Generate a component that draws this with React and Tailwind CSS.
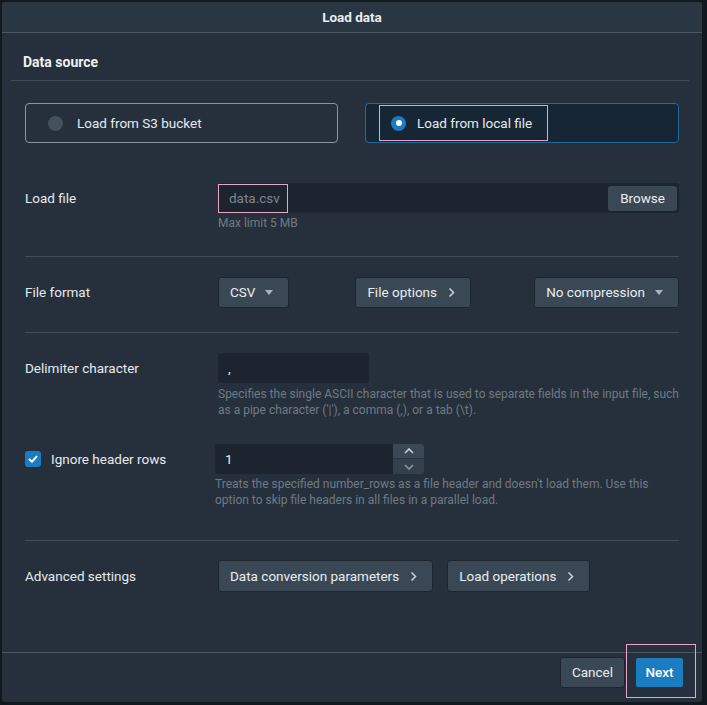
import React from 'react';

// small chevron / caret glyphs used by the buttons
const Caret = () => (
  <svg width="8" height="5" viewBox="0 0 8 5" className="ml-[10px]">
    <path d="M0 0 L8 0 L4 5 Z" fill="#a9b4bd" />
  </svg>
);

const Chevron = () => (
  <svg width="7" height="11" viewBox="0 0 7 11" className="ml-[11px]">
    <path d="M1.5 1.5 L5.5 5.5 L1.5 9.5" fill="none" stroke="#c9d1d8" strokeWidth="1.6" />
  </svg>
);

const Btn = ({ children, className = '' }) => (
  <div
    className={`flex items-center h-[31px] pl-[11px] pr-[15px] rounded-[3px] bg-[#3a4855] border border-[#1c252e] text-[13.5px] text-[#e9edf0] ${className}`}
  >
    {children}
  </div>
);

const Divider = () => <div className="h-px bg-[#414c57]" />;

const Help = ({ children, className = '' }) => (
  <p className={`text-[12px] leading-[16px] text-[#6f7a84] ${className}`}>{children}</p>
);

export default function App() {
  return (
    <div
      className="w-[707px] h-[705px] bg-[#11181e] pl-[2px] pt-[2px] text-[#e6eaee]"
      style={{ fontFamily: 'Roboto, "Liberation Sans", sans-serif' }}
    >
      <div className="w-[700px] h-[700px] bg-[#25303c] rounded-[3px] flex flex-col overflow-hidden">
        {/* header */}
        <div className="h-[31px] shrink-0 bg-[#2a3642] border-b border-[#4a5661] flex items-center justify-center text-[13.5px] font-bold text-[#e9edf0]">
          Load data
        </div>

        <div className="flex-1 flex flex-col">
          {/* section heading */}
          <div className="ml-[9px] w-[678px]">
            <div className="h-[47px] pl-[12px] pt-[19px] text-[14px] leading-[20px] font-bold text-[#eef1f4]">
              Data source
            </div>
            <Divider />
          </div>

          <div className="ml-[23px] w-[654px]">
            {/* source cards */}
            <div className="mt-[22px] flex gap-[27px]">
              <div className="w-[313px] h-[40px] rounded-[4px] border border-[#8b959e] flex items-center pl-[22px]">
                <span className="w-[15px] h-[15px] rounded-full bg-[#45525e]" />
                <span className="ml-[14px] text-[13.5px]">Load from S3 bucket</span>
              </div>
              <div className="w-[314px] h-[40px] rounded-[4px] border border-[#1d6b9f] bg-[#172634] flex items-center pl-[13px]">
                <div className="h-[36px] w-[169px] border border-[#e8a5c4] flex items-center pl-[11px]">
                  <span className="w-[15px] h-[15px] rounded-full bg-[#1b7dc0] flex items-center justify-center">
                    <span className="w-[6px] h-[6px] rounded-full bg-white" />
                  </span>
                  <span className="ml-[11px] text-[13.5px]">Load from local file</span>
                </div>
              </div>
            </div>

            {/* load file */}
            <div className="mt-[40px] flex">
              <div className="w-[193px] h-[30px] flex items-center text-[13.5px]">Load file</div>
              <div className="flex-1">
                <div className="h-[30px] bg-[#1c252f] rounded-[2px] flex items-center justify-between pr-[2px]">
                  <div className="h-[29px] w-[70px] border border-[#e8a5c4] flex items-center pl-[10px] text-[13.5px] text-[#7b858e]">
                    data.csv
                  </div>
                  <div className="h-[25px] px-[12px] rounded-[3px] bg-[#3a4855] flex items-center text-[13.5px] text-[#e9edf0]">
                    Browse
                  </div>
                </div>
                <Help className="mt-[2px]">Max limit 5 MB</Help>
              </div>
            </div>

            <div className="mt-[25px]">
              <Divider />
            </div>

            {/* file format */}
            <div className="mt-[20px] flex items-center">
              <div className="w-[193px] text-[13.5px]">File format</div>
              <Btn className="pr-[14px]">
                CSV
                <Caret />
              </Btn>
              <Btn className="ml-[66px]">
                File options
                <Chevron />
              </Btn>
              <Btn className="ml-auto">
                No compression
                <Caret />
              </Btn>
            </div>

            <div className="mt-[24px]">
              <Divider />
            </div>

            {/* delimiter */}
            <div className="mt-[20px] flex">
              <div className="w-[193px] h-[30px] flex items-center text-[13.5px]">Delimiter character</div>
              <div className="flex-1">
                <div className="w-[151px] h-[30px] bg-[#1c252f] rounded-[2px] flex items-center pl-[10px] text-[13.5px]">
                  ,
                </div>
                <Help className="mt-[3px]">
                  Specifies the single ASCII character that is used to separate fields in the input file, such as a pipe
                  character ('|'), a comma (,), or a tab (\t).
                </Help>
              </div>
            </div>

            {/* ignore header rows */}
            <div className="mt-[26px] flex">
              <div className="w-[190px] h-[30px] flex items-center">
                <span className="w-[16px] h-[16px] rounded-[3px] bg-[#1b7dc0] flex items-center justify-center">
                  <svg width="10" height="8" viewBox="0 0 10 8">
                    <path d="M1 4 L4 6.7 L9 1.2" fill="none" stroke="#fff" strokeWidth="2" />
                  </svg>
                </span>
                <span className="ml-[10px] text-[13.5px]">Ignore header rows</span>
              </div>
              <div className="flex-1">
                <div className="flex h-[30px]">
                  <div className="w-[178px] h-[30px] bg-[#1c252f] rounded-l-[2px] flex items-center pl-[10px] text-[13.5px]">
                    1
                  </div>
                  <div className="w-[31px] flex flex-col">
                    <div className="h-[15px] bg-[#3a4855] rounded-tr-[3px] flex items-center justify-center border-b border-[#2a3541]">
                      <svg width="10" height="6" viewBox="0 0 10 6">
                        <path d="M1 5 L5 1 L9 5" fill="none" stroke="#c9d1d8" strokeWidth="1.6" />
                      </svg>
                    </div>
                    <div className="h-[15px] bg-[#34414d] rounded-br-[3px] flex items-center justify-center">
                      <svg width="10" height="6" viewBox="0 0 10 6">
                        <path d="M1 1 L5 5 L9 1" fill="none" stroke="#8b96a0" strokeWidth="1.6" />
                      </svg>
                    </div>
                  </div>
                </div>
                <Help className="mt-[2px] w-[440px]">
                  Treats the specified number_rows as a file header and doesn't load them. Use this option to skip
                  file headers in all files in a parallel load.
                </Help>
              </div>
            </div>

            <div className="mt-[32px]">
              <Divider />
            </div>

            {/* advanced */}
            <div className="mt-[19px] flex items-center">
              <div className="w-[193px] text-[13.5px]">Advanced settings</div>
              <Btn className="h-[32px]">
                Data conversion parameters
                <Chevron />
              </Btn>
              <Btn className="h-[32px] ml-[14px]">
                Load operations
                <Chevron />
              </Btn>
            </div>
          </div>
        </div>

        {/* footer */}
        <div className="h-[50px] shrink-0 border-t border-[#4a5661] flex items-start justify-end pr-[6px]">
          <div className="mt-[4px] h-[31px] px-[11px] rounded-[3px] bg-[#3a4855] border border-[#1c252e] flex items-center text-[13.5px] text-[#e9edf0]">
            Cancel
          </div>
          <div className="ml-[1px] -mt-[9px] h-[54px] w-[70px] border border-[#e8a5c4] pl-[8px] pt-[12px]">
            <div className="h-[31px] w-[49px] rounded-[3px] bg-[#1b7dc0] border border-[#15344c] flex items-center justify-center text-[13.5px] font-medium text-white">
              Next
            </div>
          </div>
        </div>
      </div>
    </div>
  );
}
